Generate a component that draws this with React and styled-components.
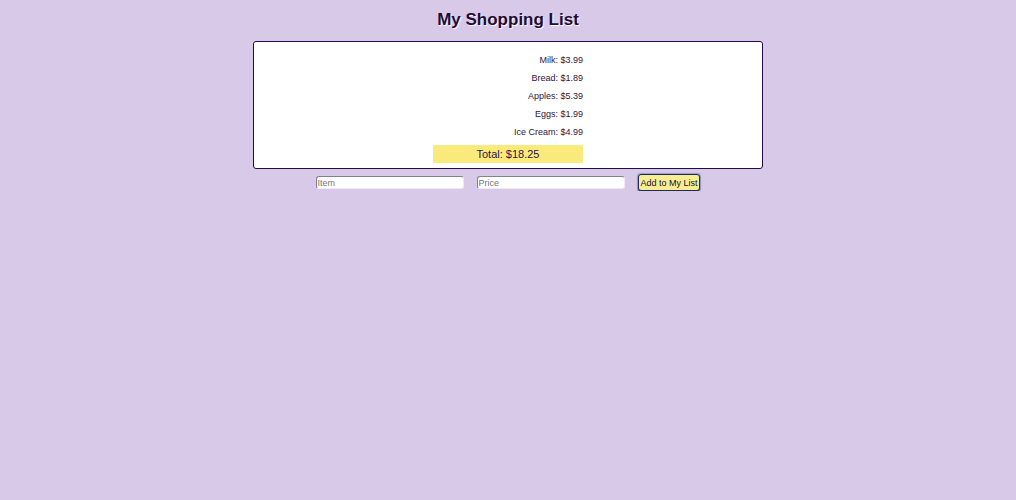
import React from "react";
import styled, { createGlobalStyle } from "styled-components";

const GlobalStyle = createGlobalStyle`
  * { box-sizing: border-box; }
  body {
    margin: 0;
    background: #d8c9e8;
    color: #2f1440;
    font-family: Arial, "Liberation Sans", sans-serif;
    font-size: 9px;
  }
`;

const Page = styled.main`
  display: flex;
  flex-direction: column;
  align-items: center;
`;

const Title = styled.h1`
  margin: 10px 0 11px;
  font-size: 17px;
  line-height: 20px;
  color: #240b36;
  text-shadow: 1px 1px 1px #fff;
`;

const Card = styled.section`
  width: calc(50% + 2px);
  min-width: 300px;
  padding: 9px 0 5px;
  display: flex;
  justify-content: center;
  background: #fff;
  border: 1px solid #240b46;
  border-radius: 3px;
`;

const Items = styled.div`
  width: 150px;
`;

const List = styled.ul`
  margin: 0;
  padding: 0;
  list-style: none;
`;

const Item = styled.li`
  height: 18px;
  line-height: 18px;
  text-align: right;
`;

const Total = styled.p`
  margin: 4px 0 0;
  font-size: 11px;
  line-height: 18px;
  text-align: center;
  background: #faea7b;
  border-radius: 1px;
`;

const Form = styled.form`
  display: flex;
  align-items: center;
  gap: 13px;
  margin-top: 5px;
`;

const Field = styled.input`
  width: 148px;
  height: 13px;
  padding: 0;
  font: inherit;
  color: inherit;
  background: #fff;
  border: 1px solid;
  border-color: #85818b #eeeaf2 #eeeaf2 #85818b;
  border-radius: 3px;
  &::placeholder { color: #757575; opacity: 1; }
`;

const AddButton = styled.button`
  height: 17px;
  padding: 0 1px;
  font: inherit;
  color: #240b36;
  background: #f7ee91;
  border: 1px solid #22285a;
  border-radius: 3px;
  box-shadow: 0 1px 1px 0 #34457c, 0 0 1px 1px #8fa0cc;
`;

const groceries = [
  ["Milk", 3.99],
  ["Bread", 1.89],
  ["Apples", 5.39],
  ["Eggs", 1.99],
  ["Ice Cream", 4.99],
];
const total = groceries.reduce((sum, [, price]) => sum + price, 0);

export default function App() {
  return (
    <>
      <GlobalStyle />
      <Page>
        <Title>My Shopping List</Title>
        <Card>
          <Items>
            <List>
              {groceries.map(([name, price]) => (
                <Item key={name}>{`${name}: $${price}`}</Item>
              ))}
            </List>
            <Total>{`Total: $${total.toFixed(2)}`}</Total>
          </Items>
        </Card>
        <Form onSubmit={(e) => e.preventDefault()}>
          <Field aria-label="Item" placeholder="Item" />
          <Field aria-label="Price" placeholder="Price" />
          <AddButton>Add to My List</AddButton>
        </Form>
      </Page>
    </>
  );
}
